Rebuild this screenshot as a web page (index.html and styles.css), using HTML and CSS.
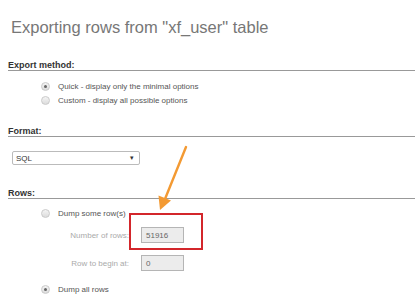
FILE: index.html
```html
<!DOCTYPE html>
<html lang="en">
  <head>
    <meta charset="UTF-8" />
    <meta name="viewport" content="width=device-width, initial-scale=1.0" />
    <title>Export</title>
    <link rel="stylesheet" href="styles.css">
  </head>
  <body>
    <div class="page">
      <h2 class="title">Exporting rows from "xf_user" table</h2>

      <h3 class="section-head">Export method:</h3>
      <ul class="options">
        <li class="option"><span class="radio checked"></span>Quick - display only the minimal options</li>
        <li class="option"><span class="radio"></span>Custom - display all possible options</li>
      </ul>

      <h3 class="section-head format-head">Format:</h3>
      <div class="select">
        <span>SQL</span>
        <span class="caret">▾</span>
      </div>

      <h3 class="section-head rows-head">Rows:</h3>
      <ul class="options rows-options">
        <li class="option"><span class="radio"></span>Dump some row(s)</li>
      </ul>
      <div class="field first-field">
        <label class="field-label">Number of rows:</label>
        <div class="field-input">51916</div>
      </div>
      <div class="field second-field">
        <label class="field-label">Row to begin at:</label>
        <div class="field-input">0</div>
      </div>
      <ul class="options last-options">
        <li class="option"><span class="radio checked"></span>Dump all rows</li>
      </ul>

      <!-- annotation overlay -->
      <div class="highlight-box"></div>
      <svg class="pointer" width="60" height="80" viewBox="140 140 60 80">
        <line x1="186" y1="147" x2="165" y2="199" stroke="#f39a33" stroke-width="2.4" stroke-linecap="round" />
        <polygon points="160,210 158.5,195.5 171,200.5" fill="#f39a33" />
      </svg>
    </div>
  </body>
</html>
```

FILE: styles.css
```css
body {
  margin: 0;
  background-color: #fff;
  font-family: "Liberation Sans", Arial, sans-serif;
  color: #444;
}
.page {
  position: relative;
  padding-left: 8px;
  height: 300px;
  overflow: hidden;
}
.title {
  margin: 17px 0 0 3px;
  font-size: 16.5px;
  line-height: 20px;
  font-weight: normal;
  color: #777;
}

.section-head {
  margin: 23px 0 0;
  font-size: 9px;
  line-height: 10px;
  font-weight: bold;
  color: #333;
  border-bottom: 1px solid #999;
}
.format-head {
  margin-top: 19px;
}
.rows-head {
  margin-top: 23px;
}

.options {
  list-style: none;
  margin: 8px 0 0;
  padding: 0 0 0 33px;
}
.option {
  display: flex;
  align-items: center;
  height: 14px;
  font-size: 8px;
  color: #555;
}
.rows-options {
  margin-top: 7px;
}
.last-options {
  margin-top: 11px;
}

.radio {
  width: 7px;
  height: 7px;
  margin-right: 8px;
  border: 1px solid #cacaca;
  border-radius: 50%;
  background: linear-gradient(#f4f4f4, #dcdcdc);
  display: flex;
  align-items: center;
  justify-content: center;
}
.radio.checked::after {
  content: "";
  width: 3px;
  height: 3px;
  border-radius: 50%;
  background-color: #666;
}

.select {
  margin: 14px 0 0 4px;
  width: 118px;
  height: 12px;
  border: 1px solid #bbb;
  border-radius: 2px;
  display: flex;
  align-items: center;
  justify-content: space-between;
  padding: 0 5px 0 3px;
  font-size: 8px;
  color: #333;
}
.select .caret {
  font-size: 7px;
  color: #333;
}

.field {
  display: flex;
  align-items: center;
  height: 16px;
}
.first-field {
  margin-top: 7px;
}
.second-field {
  margin-top: 12px;
}
.field-label {
  width: 133px;
  text-align: right;
  padding-right: 12px;
  font-size: 8px;
  color: #aaa;
  box-sizing: border-box;
}
.field-input {
  width: 43px;
  height: 16px;
  border: 1px solid #b5b5b5;
  background-color: #ececec;
  font-size: 8px;
  color: #666;
  display: flex;
  align-items: center;
  padding-left: 4px;
  box-sizing: border-box;
}

.highlight-box {
  position: absolute;
  left: 129px;
  top: 213px;
  width: 74px;
  height: 37px;
  border: 2px solid #d3262b;
  box-sizing: border-box;
}
.pointer {
  position: absolute;
  left: 140px;
  top: 140px;
}
```
